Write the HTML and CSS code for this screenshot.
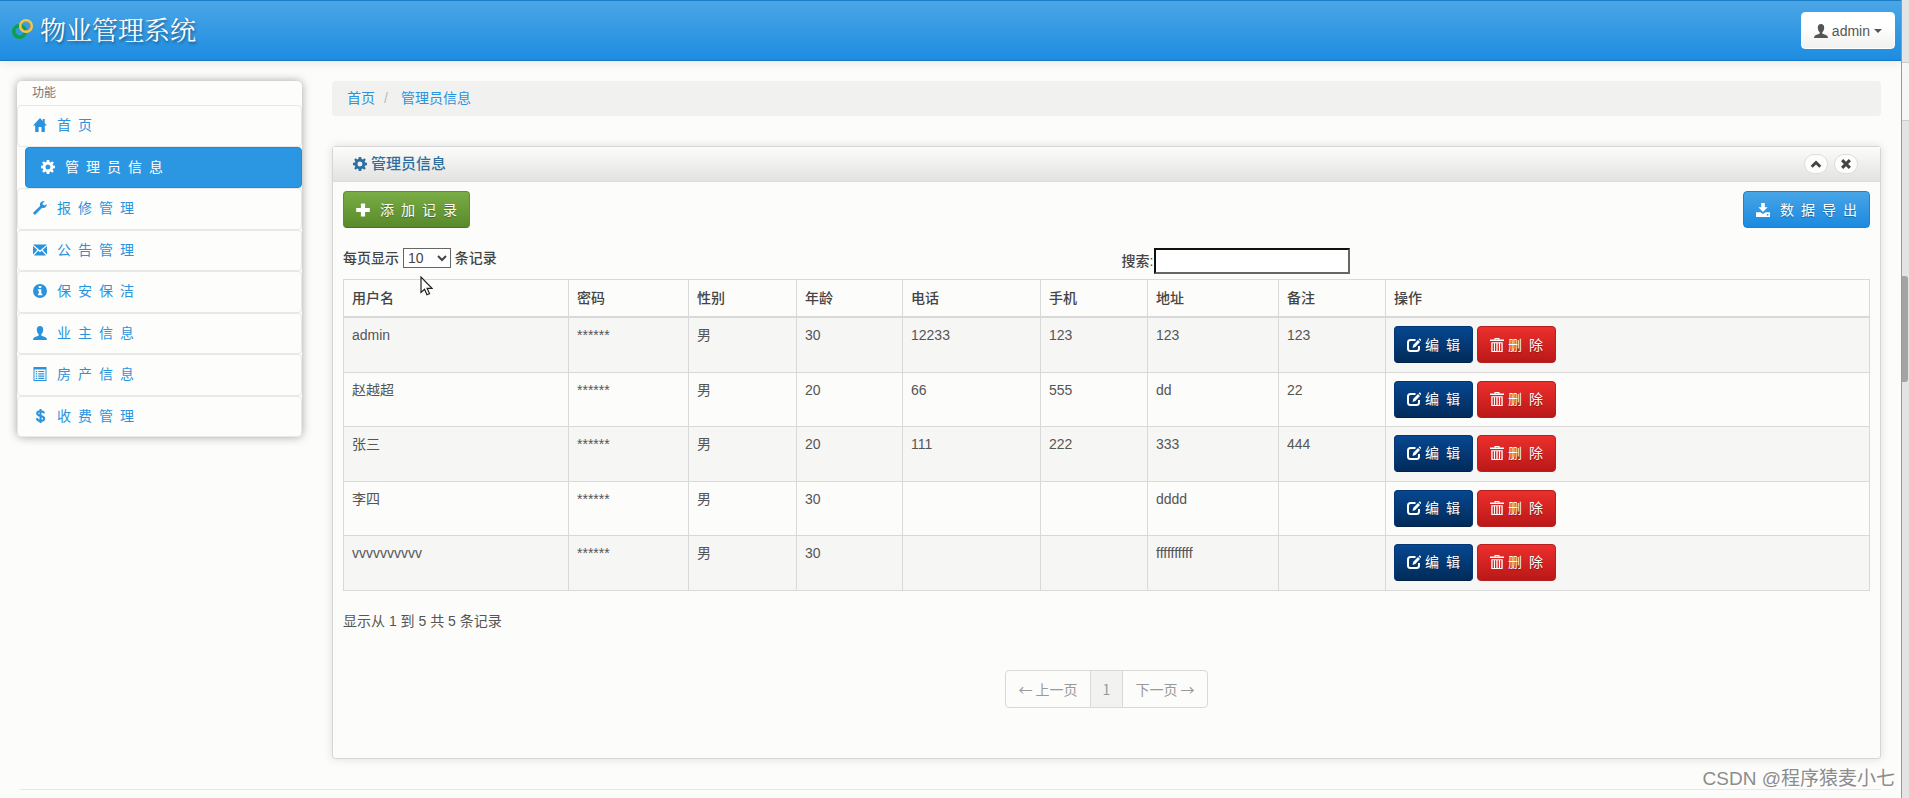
FILE: index.html
```html
<!DOCTYPE html>
<html lang="zh-CN">
<head>
<meta charset="utf-8">
<title>物业管理系统</title>
<link rel="stylesheet" href="styles.css">
</head>
<body>
<svg class="sprite" aria-hidden="true">
  <symbol id="home" viewBox="0 0 14 14"><path d="M7 0 0 7.4h2.2V14h3.4V9h2.9v5h3.3V7.4H14L11.7 5V1H9.8v2z"/></symbol>
  <symbol id="cog" viewBox="0 0 14 14"><path fill-rule="evenodd" d="M5.8 0h2.4l.4 2 1.1.5L11.4 1.300 12.800 2.700 11.600 4.400 12.100 5.400 14 5.800v2.400l-1.900.4-.5 1.100 1.200 1.600-1.500 1.500-1.700-1.200-1 .5-.4 1.900H5.800l-.4-1.900-1.100-.5-1.600 1.200-1.500-1.500 1.200-1.700-.5-1L0 8.200V5.800l1.900-.4.5-1L1.200 2.700 2.700 1.200l1.700 1.200 1-.4zM7 4.500a2.500 2.500 0 1 0 0 5 2.500 2.500 0 0 0 0-5z"/></symbol>
  <symbol id="wrench" viewBox="0 0 14 14"><path d="M13.600 3.200 11.300 4.500 9.700 3.600V2L11.900.5C10 -.2 8.100.4 7.300 2c-.5 1-.5 2-.2 2.900L.6 11.200c-1.200 1.300.8 3.300 2.100 2.100l6.400-6.500c2.700.8 4.900-1 4.500-3.600z"/></symbol>
  <symbol id="mail" viewBox="0 0 14 14"><path d="M0 1.500h14L7 7.600zM0 3l4.300 3.900L0 11.600zM14 3 9.700 6.900 14 11.600zM5.200 7.700 7 9.200l1.800-1.500 4.300 4.900H.9z"/></symbol>
  <symbol id="info" viewBox="0 0 14 14"><path fill-rule="evenodd" d="M7 0a7 7 0 1 0 0 14A7 7 0 0 0 7 0zM5.800 2h2.500v2H5.800zM4.900 5.300h3.400v4.400h1v1.600H4.900V9.700h.9V6.800h-.9z"/></symbol>
  <symbol id="user" viewBox="0 0 14 14"><path d="M7 0C4.900 0 3.700 1.400 3.800 3.700c.1 2 .8 3.900 1.900 4.600v1.200C4 10.500.9 10.900.4 12.300L0 14h14l-.4-1.700c-.5-1.400-3.600-1.800-5.300-2.800V8.300c1.100-.7 1.800-2.600 1.900-4.600C10.300 1.400 9.100 0 7 0z"/></symbol>
  <symbol id="list" viewBox="0 0 14 14"><path fill-rule="evenodd" d="M.5 0h13v14H.5zM1.500 2.500V13h11V2.500zM2.800 4h1.400v1.200H2.800zM5.300 4h6v1.100h-6zM2.800 6.300h1.400v1.200H2.800zM5.300 6.300h6v1.100h-6zM2.800 8.600h1.400v1.200H2.800zM5.300 8.600h6v1.100h-6zM2.800 10.800h1.400V12H2.800zM5.300 10.800h6v1.100h-6z"/></symbol>
  <symbol id="dollar" viewBox="0 0 14 14"><path fill="none" stroke="currentColor" stroke-width="2" d="M11 4.300C10.800 2.800 9.400 2.200 7.500 2.200 5.500 2.200 4.200 3 4.200 4.400c0 3.300 7 1.900 7 5 0 1.600-1.500 2.400-3.600 2.400-2.200 0-3.700-.8-3.800-2.700M7.500 0v14"/></symbol>
  <symbol id="plus" viewBox="0 0 14 14"><path d="M4.900.5h4.200v4.400h4.700v4.200H9.100v4.400H4.900V9.100H.2V4.900h4.700z"/></symbol>
  <symbol id="save" viewBox="0 0 14 14"><path fill-rule="evenodd" d="M5.200 0h3.600v4.200h2.900L7 9 2.300 4.200h2.900zM0 9.300h4.500L7 11l2.500-1.700H14V14H0zM10.800 11v1.400h1.600V11z"/></symbol>
  <symbol id="up" viewBox="0 0 14 14"><path fill="none" stroke="currentColor" stroke-width="3.400" d="M2 10.200 7 5.300l5 4.900"/></symbol>
  <symbol id="close" viewBox="0 0 14 14"><path fill="none" stroke="currentColor" stroke-width="3.600" d="m2.500 2.500 9 9m0-9-9 9"/></symbol>
  <symbol id="edit" viewBox="0 0 14 14"><path fill="none" stroke="currentColor" stroke-width="2" d="M8.500 2H3.500C2 2 1 2.900 1 4.500v6C1 12 2 13 3.500 13h6c1.600 0 2.500-1 2.500-2.500V8"/><path d="m5.500 10 .8-3.300L11 2l2 2-4.700 4.900zM11.600 1.400 12.700.2l1.800 1.900-1 1z"/></symbol>
  <symbol id="trash" viewBox="0 0 14 14"><path fill-rule="evenodd" d="M4.500 0h5v1.500H14v1.500H0v-1.500h4.500zM5.500.9v.6h3V.9zM1.300 4.200h11.400V14H1.300zM2.600 5.300V13h1.300V5.300zM5 5.300V13h1.300V5.300zM7.600 5.300V13h1.300V5.300zM10.100 5.300V13h1.300V5.300z"/></symbol>
</svg>
<div class="shell">
<div class="page">
  <header class="navbar">
    <a class="brand" href="#">
      <svg class="logo" viewBox="0 0 22 20" fill="none"><circle cx="7.500" cy="12.500" r="5.700" stroke="#0d9f45" stroke-width="3.600"/><circle cx="14" cy="7" r="5.800" stroke="#f5cf45" stroke-width="2.400"/><circle cx="14" cy="7" r="4.700" stroke="#d2a548" stroke-width="1.200"/></svg>
      <span>物业管理系统</span>
    </a>
    <button class="btn btn-default" type="button"><svg class="icon"><use href="#user"/></svg> admin <span class="caret"></span></button>
  </header>
  <div class="content">
    <nav class="sidebar">
      <div class="nav-header">功能</div>
      <a href="#"><svg class="icon"><use href="#home"/></svg><span>首&ensp;页</span></a>
      <a class="active" href="#"><svg class="icon"><use href="#cog"/></svg><span>管&ensp;理&ensp;员&ensp;信&ensp;息</span></a>
      <a href="#"><svg class="icon"><use href="#wrench"/></svg><span>报&ensp;修&ensp;管&ensp;理</span></a>
      <a href="#"><svg class="icon"><use href="#mail"/></svg><span>公&ensp;告&ensp;管&ensp;理</span></a>
      <a href="#"><svg class="icon"><use href="#info"/></svg><span>保&ensp;安&ensp;保&ensp;洁</span></a>
      <a href="#"><svg class="icon"><use href="#user"/></svg><span>业&ensp;主&ensp;信&ensp;息</span></a>
      <a href="#"><svg class="icon"><use href="#list"/></svg><span>房&ensp;产&ensp;信&ensp;息</span></a>
      <a href="#"><svg class="icon"><use href="#dollar"/></svg><span>收&ensp;费&ensp;管&ensp;理</span></a>
    </nav>
    <main>
      <ul class="breadcrumb"><li><a href="#">首页</a></li><li class="sep">/</li><li><a href="#">管理员信息</a></li></ul>
      <section class="box">
        <div class="box-header">
          <h2><svg class="icon"><use href="#cog"/></svg>管理员信息</h2>
          <button class="round" type="button" aria-label="收起"><svg class="icon-sm"><use href="#up"/></svg></button>
          <button class="round" type="button" aria-label="关闭"><svg class="icon-sm"><use href="#close"/></svg></button>
        </div>
        <div class="box-content">
          <div class="actions">
            <button class="btn btn-success" type="button"><svg class="icon"><use href="#plus"/></svg><span>添&ensp;加&ensp;记&ensp;录</span></button>
            <button class="btn btn-primary" type="button"><svg class="icon"><use href="#save"/></svg><span>数&ensp;据&ensp;导&ensp;出</span></button>
          </div>
          <div class="filters">
            <label class="length">每页显示 <select><option>10</option><option>25</option><option>50</option></select> 条记录</label>
            <label class="search">搜索:<input type="text"></label>
          </div>
          <table>
            <colgroup><col class="c-name"><col class="c-pass"><col class="c-sex"><col class="c-age"><col class="c-tel"><col class="c-mobile"><col class="c-addr"><col class="c-note"><col></colgroup>
            <thead><tr><th>用户名</th><th>密码</th><th>性别</th><th>年龄</th><th>电话</th><th>手机</th><th>地址</th><th>备注</th><th>操作</th></tr></thead>
            <tbody>
              <tr><td>admin</td><td>******</td><td>男</td><td>30</td><td>12233</td><td>123</td><td>123</td><td>123</td><td><div class="ops"><button class="btn btn-edit" type="button"><svg class="icon"><use href="#edit"/></svg>编&ensp;辑</button><button class="btn btn-danger" type="button"><svg class="icon"><use href="#trash"/></svg>删&ensp;除</button></div></td></tr>
              <tr><td>赵越超</td><td>******</td><td>男</td><td>20</td><td>66</td><td>555</td><td>dd</td><td>22</td><td><div class="ops"><button class="btn btn-edit" type="button"><svg class="icon"><use href="#edit"/></svg>编&ensp;辑</button><button class="btn btn-danger" type="button"><svg class="icon"><use href="#trash"/></svg>删&ensp;除</button></div></td></tr>
              <tr><td>张三</td><td>******</td><td>男</td><td>20</td><td>111</td><td>222</td><td>333</td><td>444</td><td><div class="ops"><button class="btn btn-edit" type="button"><svg class="icon"><use href="#edit"/></svg>编&ensp;辑</button><button class="btn btn-danger" type="button"><svg class="icon"><use href="#trash"/></svg>删&ensp;除</button></div></td></tr>
              <tr><td>李四</td><td>******</td><td>男</td><td>30</td><td></td><td></td><td>dddd</td><td></td><td><div class="ops"><button class="btn btn-edit" type="button"><svg class="icon"><use href="#edit"/></svg>编&ensp;辑</button><button class="btn btn-danger" type="button"><svg class="icon"><use href="#trash"/></svg>删&ensp;除</button></div></td></tr>
              <tr><td>vvvvvvvvvv</td><td>******</td><td>男</td><td>30</td><td></td><td></td><td>ffffffffff</td><td></td><td><div class="ops"><button class="btn btn-edit" type="button"><svg class="icon"><use href="#edit"/></svg>编&ensp;辑</button><button class="btn btn-danger" type="button"><svg class="icon"><use href="#trash"/></svg>删&ensp;除</button></div></td></tr>
            </tbody>
          </table>
          <p class="summary">显示从 1 到 5 共 5 条记录</p>
          <ul class="pagination"><li><a href="#">← 上一页</a></li><li class="current"><a href="#">1</a></li><li><a href="#">下一页 →</a></li></ul>
        </div>
      </section>
    </main>
  </div>
  <hr>
</div>
<div class="edge"><div class="edge-cap"></div><div class="edge-gap"></div><div class="edge-track"><div class="edge-thumb"></div></div></div>
</div>
<svg class="cursor" viewBox="0 0 13 20"><path d="M1 1v15.500l3.600-3.300 2.300 5.500 2.600-1.100-2.400-5.300H12z" fill="#fff" stroke="#222" stroke-width="1.200"/></svg>
<div class="watermark">CSDN @程序猿麦小七</div>
</body>
</html>
```
FILE: styles.css
```css
* { box-sizing: border-box; }
body {
  margin: 0;
  height: 100vh;
  overflow: hidden;
  background: #fcfcfa;
  color: #555;
  font: 14px/20px "Liberation Sans", "Noto Sans CJK SC", sans-serif;
}
.sprite { position: absolute; width: 0; height: 0; }
a { color: #2a93de; text-decoration: none; }
ul { list-style: none; margin: 0; padding: 0; }
.icon { width: 14px; height: 14px; fill: currentColor; flex: none; }
.icon-sm { width: 12px; height: 12px; fill: currentColor; }

.shell { display: flex; min-height: 100vh; }
.page { flex: 1; min-width: 0; }

.navbar {
  display: flex;
  justify-content: space-between;
  align-items: flex-start;
  height: 61px;
  padding: 11px 6px 0 12px;
  background: linear-gradient(#4ba6e6, #1d8ce0);
  border-top: 1px solid #1a7cc6;
  border-bottom: 1px solid #1678c5;
  box-shadow: 0 1px 10px rgba(0, 0, 0, .1);
}
.brand {
  display: flex;
  align-items: center;
  gap: 6px;
  height: 34px;
  color: #fff;
  font: 26px/32px "Noto Serif CJK SC", "Noto Sans CJK SC", sans-serif;
  text-shadow: 1px 2px 3px rgba(0, 0, 0, .4);
}
.logo { width: 22px; height: 20px; }

.btn {
  display: inline-flex;
  align-items: center;
  height: 37px;
  padding: 0 12px;
  border: 1px solid;
  border-radius: 4px;
  color: #fff;
  font: inherit;
  white-space: nowrap;
  text-shadow: 0 1px 1px rgba(0, 0, 0, .3);
}
.btn-default {
  gap: 4px;
  color: #555;
  border-color: #fff;
  background: linear-gradient(#fff 40%, #f1f1ef);
  text-shadow: none;
}
.caret { border: 4px solid transparent; border-top-color: #555; border-bottom: 0; }
.btn-success { gap: 10px; background: linear-gradient(#7aad45, #588a2b); border-color: #5c8f31; border-bottom-color: #497522; }
.btn-primary { gap: 10px; background: linear-gradient(#48a5e6, #1b8ae0); border-color: #1c82cd; }
.btn-edit { gap: 4px; background: linear-gradient(#064791, #012b5a); border-color: #033672; border-bottom-color: #012348; }
.btn-danger { gap: 4px; background: linear-gradient(#ec2f2c, #ba1818); border-color: #b52020; }

.content {
  display: grid;
  grid-template-columns: 285px minmax(0, 1fr);
  gap: 30px;
  padding: 20px 20px 0 17px;
}
.sidebar {
  align-self: start;
  border-radius: 5px;
  background: #fdfdfc;
  box-shadow: 0 0 10px rgba(0, 0, 0, .35);
}
.nav-header { padding: 2px 15px; font-size: 12px; color: #777; }
.sidebar a {
  display: flex;
  align-items: center;
  gap: 10px;
  height: 42px;
  padding: 0 15px 2px;
  border: 1px solid #e8e8e8;
  border-radius: 4px;
}
.sidebar a:nth-child(odd) { height: 41px; }
.sidebar a.active { margin-left: 8px; color: #fff; background: #2b97e3; border-color: #218bd5; }

.breadcrumb { display: flex; margin: 0 0 30px; padding: 7px 15px 8px; border-radius: 4px; background: #f1f1f0; }
.sep { padding: 0 13px 0 9px; color: #bbb; }

.box {
  border: 1px solid #d6d6d6;
  border-radius: 3px;
  box-shadow: 0 0 10px rgba(0, 0, 0, .12);
}
.box-header {
  display: flex;
  align-items: center;
  gap: 6px;
  height: 35px;
  padding: 0 22px 0 20px;
  border-bottom: 1px solid #dcdcdc;
  background: linear-gradient(#fcfcfb, #e2e2e1);
}
h2 { display: flex; align-items: center; gap: 4px; flex: 1; margin: 0; font-size: 15px; line-height: 20px; font-weight: 500; color: #2c6f9f; }
.round {
  display: flex;
  align-items: center;
  justify-content: center;
  width: 24px;
  height: 20px;
  padding: 0;
  color: #444;
  background: #fdfdfc;
  border: 1px solid #ddd;
  border-radius: 10px;
}
.box-content { padding: 9px 10px 50px; }
.actions { display: flex; justify-content: space-between; }
.filters { display: grid; grid-template-columns: 1fr 1fr; height: 51px; align-items: end; color: #444; }
label { font-weight: 500; }
.length { align-self: center; padding-top: 8px; }
select {
  width: 48px;
  height: 20px;
  padding: 0;
  border: 1px solid #666;
  border-radius: 0;
  background: #fff;
  color: #444;
  font: inherit;
}
.search { display: flex; align-items: center; gap: 1px; padding: 0 0 5px 15px; }
input { width: 196px; height: 26px; border: 2px inset #666; background: #fff; font: inherit; }

table { width: 100%; table-layout: fixed; border-collapse: collapse; border: 1px solid #d9d9d9; }
th, td { padding: 8px; border: 1px solid #d9d9d9; text-align: left; vertical-align: top; }
th { height: 37px; color: #444; font-weight: 500; border-bottom-width: 2px; }
td { line-height: 18px; }
tbody tr:nth-child(odd) { height: 55px; background: #f6f6f5; }
.c-name { width: 225px; }
.c-pass { width: 120px; }
.c-sex { width: 108px; }
.c-age { width: 106px; }
.c-tel { width: 138px; }
.c-mobile { width: 107px; }
.c-addr { width: 131px; }
.c-note { width: 107px; }
.ops { display: flex; gap: 4px; }

.summary { margin: 20px 0 39px; }
.pagination {
  display: flex;
  width: max-content;
  margin: 0 auto;
  border: 1px solid #d9d9d9;
  border-radius: 4px;
  font-family: "Noto Sans CJK SC", sans-serif;
}
.pagination a { display: block; padding: 8px 12px; color: #999; }
.current { background: #f2f2f1; border: solid #d9d9d9; border-width: 0 1px; }
hr { margin: 30px 20px 0; border: 0; border-top: 1px solid #e8e8e7; }

.edge { display: flex; flex-direction: column; width: 8px; border-left: 1px solid #999; background: #e4e4e4; }
.edge-cap { height: 63px; border-bottom: 1px solid #ccc; }
.edge-gap { height: 58px; background: #f7f7f7; border-bottom: 1px solid #ccc; }
.edge-track { flex: 1; padding-top: 155px; }
.edge-thumb { width: 6px; height: 106px; background: #a4a4a4; border-radius: 0 3px 3px 0; }

.cursor { position: absolute; left: 420px; top: 276px; width: 13px; height: 20px; }
.watermark { position: absolute; right: 14px; bottom: 6px; font-size: 19px; line-height: 26px; color: #8c8c8c; text-shadow: 1px 1px 0 #fff; }
```
